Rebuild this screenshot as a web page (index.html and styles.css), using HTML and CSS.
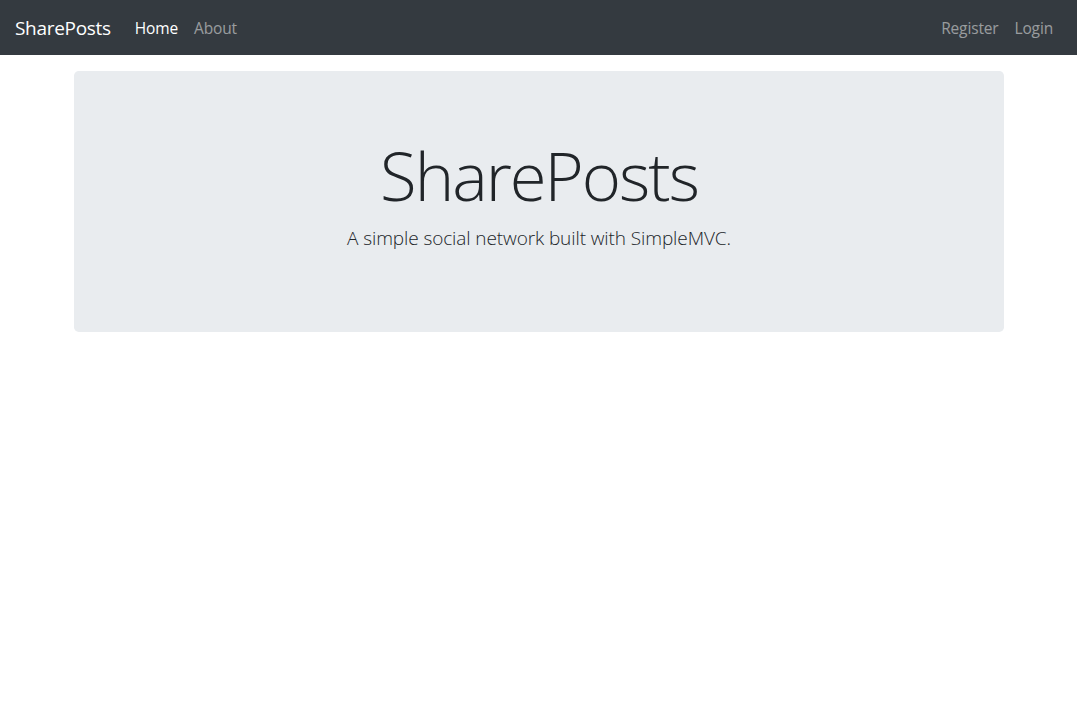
FILE: index.html
```html
<!DOCTYPE html>
<html lang="en">
<head>
<meta charset="utf-8">
<title>SharePosts</title>
<link rel="stylesheet" href="styles.css">
</head>
<body>
<nav class="navbar">
  <a class="brand" href="#">SharePosts</a>
  <ul class="nav nav-left">
    <li><a class="nav-link active" href="#">Home</a></li>
    <li><a class="nav-link" href="#">About</a></li>
  </ul>
  <ul class="nav nav-right">
    <li><a class="nav-link" href="#">Register</a></li>
    <li><a class="nav-link" href="#">Login</a></li>
  </ul>
</nav>
<main class="container">
  <section class="jumbotron">
    <h1 class="display">SharePosts</h1>
    <p class="lead">A simple social network built with SimpleMVC.</p>
  </section>
</main>
</body>
</html>
```
FILE: styles.css
```css
* { box-sizing: border-box; }
html, body { margin: 0; padding: 0; }
body {
  font-family: "Open Sans", "Noto Sans", sans-serif;
  font-size: 16px;
  color: #212529;
  background: #fff;
}
a { text-decoration: none; }
.navbar {
  display: flex;
  align-items: center;
  height: 55px;
  padding: 0 16px 0 15px;
  background: #343a40;
}
.brand {
  color: #fff;
  font-size: 19px;
  margin-right: 16px;
  letter-spacing: -0.3px;
}
.nav {
  display: flex;
  list-style: none;
  margin: 0;
  padding: 0;
}
.nav-right { margin-left: auto; }
.nav-link {
  display: block;
  padding: 8px;
  color: rgba(255,255,255,.5);
  font-size: 15.5px;
  letter-spacing: -0.15px;
}
.nav-link.active { color: #fff; }
.container {
  width: 960px;
  margin: 0 auto;
  padding: 0 15px;
  position: relative;
  left: 0.5px;
}
.jumbotron {
  margin-top: 16px;
  height: 261px;
  padding: 64px 32px 0;
  background: #e9ecef;
  border-radius: 4.8px;
  text-align: center;
}
.display {
  margin: 0 0 9px;
  font-size: 67px;
  font-weight: 300;
  line-height: 1.2;
  letter-spacing: -2px;
}
.lead {
  margin: 0;
  font-size: 19px;
  font-weight: 300;
  line-height: 1.5;
  letter-spacing: -0.1px;
}
```
